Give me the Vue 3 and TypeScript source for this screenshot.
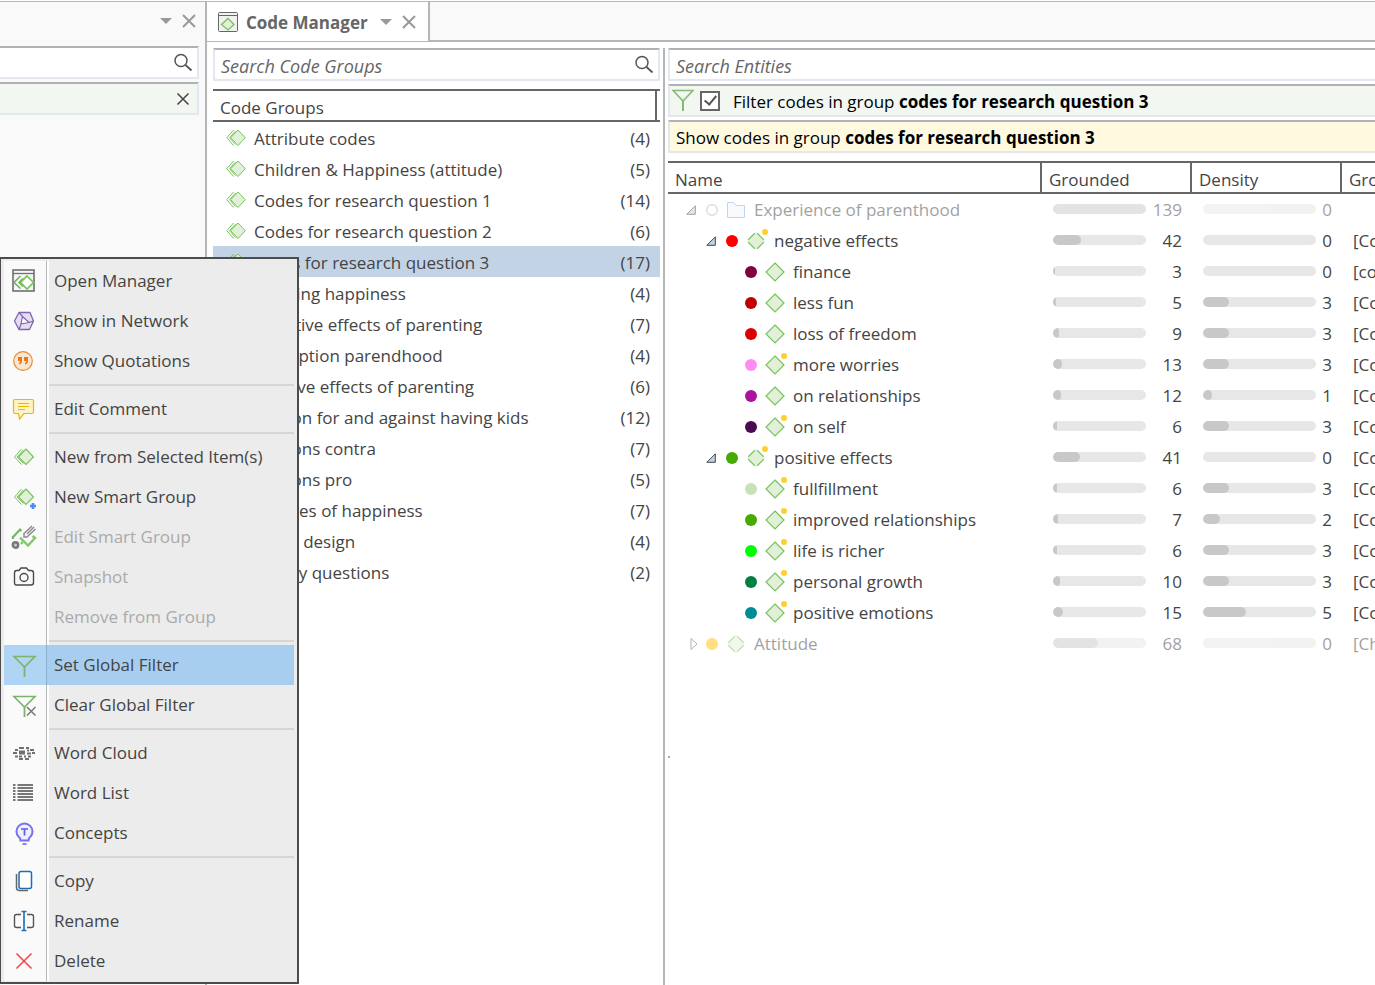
<script setup lang="ts">
import { ref } from 'vue'

interface CodeGroup { name: string; count: number }
interface CodeRow {
  name: string
  level: number
  color: string
  grounded: number
  density: number
  groups: string
  folder?: boolean
  comment?: boolean
  dashed?: boolean
  muted?: boolean
  state?: 'open' | 'closed'
}
interface MenuItem { label: string; icon: string; disabled?: boolean; active?: boolean }

const groups: CodeGroup[] = [
  { name: 'Attribute codes', count: 4 },
  { name: 'Children & Happiness (attitude)', count: 5 },
  { name: 'Codes for research question 1', count: 14 },
  { name: 'Codes for research question 2', count: 6 },
  { name: 'codes for research question 3', count: 17 },
  { name: 'Defining happiness', count: 4 },
  { name: 'Negative effects of parenting', count: 7 },
  { name: 'Perception parendhood', count: 4 },
  { name: 'Positive effects of parenting', count: 6 },
  { name: 'Reason for and against having kids', count: 12 },
  { name: 'Reasons contra', count: 7 },
  { name: 'Reasons pro', count: 5 },
  { name: 'Sources of happiness', count: 7 },
  { name: 'Study design', count: 4 },
  { name: 'Survey questions', count: 2 },
]
const selected = ref(4)
const filterOn = ref(true)
const groupSearch = ref('')
const entitySearch = ref('')
const leftSearch = ref('')

const tag = '[Codes for research question 3]'
const rows: CodeRow[] = [
  { name: 'Experience of parenthood', level: 0, color: '', grounded: 139, density: 0, groups: '', folder: true, muted: true, state: 'open' },
  { name: 'negative effects', level: 1, color: '#ff0000', grounded: 42, density: 0, groups: tag, comment: true, dashed: true, state: 'open' },
  { name: 'finance', level: 2, color: '#800040', grounded: 3, density: 0, groups: '[codes for research question 3]' },
  { name: 'less fun', level: 2, color: '#c00000', grounded: 5, density: 3, groups: tag },
  { name: 'loss of freedom', level: 2, color: '#de0000', grounded: 9, density: 3, groups: tag },
  { name: 'more worries', level: 2, color: '#ff8cf5', grounded: 13, density: 3, groups: tag, comment: true },
  { name: 'on relationships', level: 2, color: '#a814a0', grounded: 12, density: 1, groups: tag },
  { name: 'on self', level: 2, color: '#4c0a50', grounded: 6, density: 3, groups: tag, comment: true },
  { name: 'positive effects', level: 1, color: '#46aa00', grounded: 41, density: 0, groups: tag, comment: true, dashed: true, state: 'open' },
  { name: 'fullfillment', level: 2, color: '#c6e2b6', grounded: 6, density: 3, groups: tag, comment: true },
  { name: 'improved relationships', level: 2, color: '#46aa00', grounded: 7, density: 2, groups: tag, comment: true },
  { name: 'life is richer', level: 2, color: '#00ff00', grounded: 6, density: 3, groups: tag, comment: true },
  { name: 'personal growth', level: 2, color: '#008040', grounded: 10, density: 3, groups: tag, comment: true },
  { name: 'positive emotions', level: 2, color: '#008c96', grounded: 15, density: 5, groups: tag, comment: true },
  { name: 'Attitude', level: 0, color: '#ffc000', grounded: 68, density: 0, groups: '[Children & Happiness]', dashed: true, muted: true, state: 'closed' },
]
const maxGrounded = 139
const maxDensity = 13
const share = (value: number, max: number): string => `${(value / max) * 100}%`

const menu: MenuItem[][] = [
  [
    { label: 'Open Manager', icon: 'manager' },
    { label: 'Show in Network', icon: 'network' },
    { label: 'Show Quotations', icon: 'quote' },
  ],
  [{ label: 'Edit Comment', icon: 'comment' }],
  [
    { label: 'New from Selected Item(s)', icon: 'group' },
    { label: 'New Smart Group', icon: 'smart' },
    { label: 'Edit Smart Group', icon: 'editsmart', disabled: true },
    { label: 'Snapshot', icon: 'camera', disabled: true },
    { label: 'Remove from Group', icon: '', disabled: true },
  ],
  [
    { label: 'Set Global Filter', icon: 'filter', active: true },
    { label: 'Clear Global Filter', icon: 'nofilter' },
  ],
  [
    { label: 'Word Cloud', icon: 'cloud' },
    { label: 'Word List', icon: 'list' },
    { label: 'Concepts', icon: 'bulb' },
  ],
  [
    { label: 'Copy', icon: 'copy' },
    { label: 'Rename', icon: 'rename' },
    { label: 'Delete', icon: 'delete' },
  ],
]
</script>

<template>
  <div class="app">
    <aside class="side">
      <div class="side-bar">
        <button class="plain" aria-label="Panel options"><svg width="12" height="6" viewBox="0 0 12 6"><path d="M0 0H12L6 6Z" fill="#999" /></svg></button>
        <button class="plain" aria-label="Close panel"><svg width="14" height="14" viewBox="0 0 14 14"><path d="M1 1L13 13M13 1L1 13" stroke="#999" stroke-width="2" /></svg></button>
      </div>
      <div class="field side-field">
        <input v-model="leftSearch" type="text" aria-label="Search" />
        <svg class="lens" width="20" height="20" viewBox="0 0 20 20"><circle cx="8" cy="7.500" r="6" fill="none" stroke="#555" stroke-width="1.500" /><path d="M12.500 12L18.500 17.500" stroke="#555" stroke-width="1.800" /></svg>
      </div>
      <div class="field side-field green side-filter">
        <span class="grow"></span>
        <button class="plain" aria-label="Clear filter"><svg width="14" height="14" viewBox="0 0 14 14"><path d="M1.500 1.500L12.500 12.500M12.500 1.500L1.500 12.500" stroke="#444" stroke-width="1.500" /></svg></button>
      </div>
    </aside>

    <main class="main">
      <header class="tabs">
        <div class="tab">
          <svg width="20" height="20" viewBox="0 0 20 20">
            <rect x=".5" y=".5" width="19" height="19" rx="1" fill="#f1f1f1" stroke="#666" /><path d="M0 3.500H20" stroke="#666" />
            <path d="M10 6.500L16 12.500L10 18L3.500 12.500Z" fill="#e2f0da" stroke="#77c35a" stroke-width="1.300" />
          </svg>
          <h1>Code Manager</h1>
          <button class="plain" aria-label="Tab options"><svg width="12" height="6" viewBox="0 0 12 6"><path d="M0 0H12L6 6Z" fill="#999" /></svg></button>
          <button class="plain" aria-label="Close tab"><svg width="14" height="14" viewBox="0 0 14 14"><path d="M1 1L13 13M13 1L1 13" stroke="#999" stroke-width="2" /></svg></button>
        </div>
        <div class="tab-rest"></div>
      </header>

      <div class="panes">
        <section class="groups">
          <div class="field">
            <input v-model="groupSearch" type="text" placeholder="Search Code Groups" aria-label="Search Code Groups" />
            <svg class="lens" width="20" height="20" viewBox="0 0 20 20"><circle cx="8" cy="7.500" r="6" fill="none" stroke="#555" stroke-width="1.500" /><path d="M12.500 12L18.500 17.500" stroke="#555" stroke-width="1.800" /></svg>
          </div>
          <h2 class="groups-head"><span>Code Groups</span></h2>
          <ul class="group-list">
            <li v-for="(g, i) in groups" :key="g.name">
              <button class="group-row" :class="{ selected: i === selected }" @click="selected = i">
                <svg width="20" height="18" viewBox="0 0 20 18">
                  <path d="M7.500 1L.8 8.700L7.500 16.500M9.500 2L3.500 8.700L9.500 15.500" fill="none" stroke="#77c35a" />
                  <path d="M12 1L19.300 8.700L12 16.500L4.700 8.700Z" fill="#e2f0da" stroke="#77c35a" />
                </svg>
                <span class="row-text grow">{{ g.name }}</span>
                <span class="row-text">({{ g.count }})</span>
              </button>
            </li>
          </ul>
        </section>

        <section class="entities">
          <span class="grip"></span>
          <div class="field">
            <input v-model="entitySearch" type="text" placeholder="Search Entities" aria-label="Search Entities" />
          </div>
          <div class="field green filter">
            <svg width="22" height="23" viewBox="0 0 22 23"><path d="M1 1.500H21L11 12Z" fill="none" stroke="#86b878" stroke-width="1.600" /><path d="M11 11V22" stroke="#86b878" stroke-width="2" /></svg>
            <input id="use-filter" v-model="filterOn" type="checkbox" />
            <label for="use-filter" class="row-text">Filter codes in group <b>codes for research question 3</b></label>
          </div>
          <p class="field yellow"><span class="row-text">Show codes in group <b>codes for research question 3</b></span></p>

          <table>
            <colgroup><col class="c-name" /><col class="c-num" /><col class="c-num" /><col /></colgroup>
            <thead>
              <tr><th>Name</th><th>Grounded</th><th>Density</th><th>Groups</th></tr>
            </thead>
            <tbody>
              <tr v-for="r in rows" :key="r.name" :class="{ muted: r.muted }">
                <td>
                  <div class="name" :class="'level-' + r.level">
                    <span class="twist">
                      <svg v-if="r.state === 'open'" width="12" height="10" viewBox="0 0 12 10"><path d="M.8 9.300H9.300V.9Z" fill="#c3d3e6" stroke="#444" /></svg>
                      <svg v-else-if="r.state === 'closed'" width="12" height="12" viewBox="-4 0 12 12"><path d="M1 .5L7 6L1 11.500Z" fill="#fff" stroke="#666" /></svg>
                    </span>
                    <span class="dot-cell">
                      <svg width="12" height="12" viewBox="0 0 12 12">
                        <circle v-if="r.color" cx="6" cy="6" r="6" :fill="r.color" />
                        <circle v-else cx="6" cy="6" r="5.300" fill="none" stroke="#bbb" stroke-width="1.400" />
                      </svg>
                    </span>
                    <svg v-if="r.folder" class="kind" width="28" height="24" viewBox="0 0 28 24"><path d="M5.500 4.500H11.500L14 7.500H22.500V19.500H5.500Z" fill="#f3f7fe" stroke="#86a9e0" stroke-linejoin="round" /></svg>
                    <svg v-else class="kind" width="28" height="24" viewBox="0 0 28 24">
                      <path d="M14 3L23 12L14 21L5 12Z" fill="#e2f0da" stroke="#77c35a" stroke-width="1.200" :stroke-dasharray="r.dashed ? '9.300 3.428' : undefined" :stroke-dashoffset="r.dashed ? -1.714 : undefined" />
                      <circle v-if="r.comment" cx="23" cy="3" r="3" fill="#ffcf30" />
                    </svg>
                    <span class="label">{{ r.name }}</span>
                  </div>
                </td>
                <td>
                  <div class="measure">
                    <span class="bar"><i :style="{ width: share(r.grounded, maxGrounded) }"></i></span>
                    <span class="num wide">{{ r.grounded }}</span>
                  </div>
                </td>
                <td>
                  <div class="measure">
                    <span class="bar"><i :style="{ width: share(r.density, maxDensity) }"></i></span>
                    <span class="num">{{ r.density }}</span>
                  </div>
                </td>
                <td class="tags">{{ r.groups }}</td>
              </tr>
            </tbody>
          </table>
        </section>
      </div>
    </main>

    <div class="menu" role="menu">
      <div v-for="(section, s) in menu" :key="s" class="menu-section" role="group">
        <button v-for="m in section" :key="m.label" class="item" :class="{ active: m.active }" :disabled="m.disabled" role="menuitem">
          <span class="icon">
            <svg width="24" height="24" viewBox="0 0 24 24" fill="none">
              <template v-if="m.icon === 'manager'">
                <rect x="1" y="1" width="21" height="21" fill="#f6f6f6" stroke="#707070" stroke-width="1.600" /><path d="M1 4.500H22" stroke="#707070" stroke-width="1.300" />
                <path d="M8.500 7L2 13.500L8.500 19.500M11 9.500L7 13.500L11 17.500" stroke="#6fae5e" stroke-width="1.500" /><path d="M15 7L21.500 13.500L15 20L8.500 13.500Z" fill="#fff" stroke="#77c35a" stroke-width="1.700" />
              </template>
              <template v-else-if="m.icon === 'network'">
                <path d="M7 3.500H18L21.500 12L17.500 20.500H7L2.500 12Z" fill="#e5deef" stroke="#8064b4" stroke-width="1.300" stroke-linejoin="round" />
                <path d="M10.500 7.500L17 13.500L9 15ZM7 3.500L10.500 7.500M17 13.500L21.500 12M9 15L7 20.500" stroke="#8064b4" stroke-width="1.200" /><path d="M11 9.500L15.500 13L10 14Z" fill="#fff" />
              </template>
              <template v-else-if="m.icon === 'quote'">
                <circle cx="11" cy="12" r="9.300" fill="#fbe5d0" stroke="#e28b35" stroke-width="1.200" />
                <path d="M6 8H10V12Q10 14.500 7 15.500V14Q8.200 13.300 8.200 12H6ZM12 8H16V12Q16 14.500 13 15.500V14Q14.200 13.300 14.200 12H12Z" fill="#df7c1c" />
              </template>
              <path v-else-if="m.icon === 'comment'" d="M3 2.500H20Q21.500 2.500 21.500 4V15Q21.500 16.500 20 16.500H12L7.500 22L6.500 16.500H3Q1.500 16.500 1.500 15V4Q1.500 2.500 3 2.500ZM6 6.500H17M6 9.500H17M6 12.500H13" fill="#fff3c4" stroke="#ecb800" stroke-width="1.200" />
              <template v-else-if="m.icon === 'group' || m.icon === 'smart'">
                <path d="M9.500 4L2.500 12L9.500 19.500M11.500 5L5 12L11.500 18.500" stroke="#77c35a" /><path d="M14 4L21.500 12L14 19.500L6.500 12Z" fill="#e2f0da" stroke="#77c35a" stroke-width="1.100" />
                <path v-if="m.icon === 'smart'" d="M21 18V24M18 21H24" stroke="#4a8df8" stroke-width="2.600" />
              </template>
              <template v-else-if="m.icon === 'editsmart'">
                <path d="M1 12L8 4.500L9.500 6M1 11V14" stroke="#76b566" stroke-width="2.200" /><path d="M8 12.500L16 20.500L23 13L20.500 11M9 17L10.500 19" stroke="#80c968" stroke-width="2.400" />
                <path d="M12 8.500L20 1M15 12L23.500 4M12 8V12H15.500M15 9L22 2" stroke="#8c8c8c" stroke-width="1.500" /><circle cx="3.500" cy="20" r="2.700" fill="#ccc" stroke="#777" stroke-width="2.400" />
              </template>
              <template v-else-if="m.icon === 'camera'">
                <path d="M4.500 5.500H7L9 3H14.500L16.500 5.500H19Q21.500 5.500 21.500 8V17.500Q21.500 20 19 20H4.500Q2.500 20 2.500 17.500V8Q2.500 5.500 4.500 5.500Z" stroke="#4a4a4a" stroke-width="1.400" /><circle cx="12" cy="12.500" r="4" stroke="#4a4a4a" stroke-width="1.400" />
              </template>
              <template v-else-if="m.icon === 'filter' || m.icon === 'nofilter'">
                <path d="M2 3.500H23L12.500 14Z" stroke="#7db36c" stroke-width="1.600" /><path d="M12.500 13V24" stroke="#7db36c" stroke-width="1.800" />
                <path v-if="m.icon === 'nofilter'" d="M15 14L23.500 22.500M23.500 14L15 22.500" stroke="#777" stroke-width="1.500" />
              </template>
              <path v-else-if="m.icon === 'cloud'" d="M7 7H12M14 7H17M3 9H6M18 9H22M1 12H5M7 10.500H13M7 12.500H13M15 12.500H19M20 12H23M15 9.500H17M3 15.500H6M7 15.500H10M12 15.500H14M16 15.500H19M7 18H11M13 18H17" stroke="#707070" stroke-width="2" />
              <path v-else-if="m.icon === 'list'" d="M1 4H3.500M5.500 4H21M1 7H3.500M5.500 7H21M1 10H3.500M5.500 10H21M1 13H3.500M5.500 13H21M1 16H3.500M5.500 16H21M1 19H3.500M5.500 19H21" stroke="#777" stroke-width="1.800" />
              <template v-else-if="m.icon === 'bulb'">
                <path d="M8.500 19.500Q8.500 17 6.500 15.500Q4.500 13.500 4.500 10.500A8 8 0 0 1 20.500 10.500Q20.500 13.500 18.500 15.500Q16.500 17 16.500 19.500Z" fill="#f0effe" stroke="#7472f0" stroke-width="2" />
                <path d="M9 8H16M12.500 8V14.500M10.500 23H14.500" stroke="#5d5bea" stroke-width="1.700" />
              </template>
              <template v-else-if="m.icon === 'copy'">
                <path d="M4.500 5V18.500Q4.500 21.500 7.500 21.500H16" stroke="#666" stroke-width="1.500" /><rect x="7" y="2.500" width="12.500" height="17" rx="2" fill="#fff" stroke="#1a6fb8" stroke-width="1.500" />
              </template>
              <template v-else-if="m.icon === 'rename'">
                <path d="M9 5.500H4.500Q2.500 5.500 2.500 7.500V16.500Q2.500 18.500 4.500 18.500H9M15 5.500H19.500Q21.500 5.500 21.500 7.500V16.500Q21.500 18.500 19.500 18.500H15" stroke="#555" stroke-width="1.400" /><path d="M12 2.500V21.500M9.500 2.500H14.500M9.500 21.500H14.500" stroke="#1a6fb8" stroke-width="1.600" />
              </template>
              <path v-else-if="m.icon === 'delete'" d="M4.500 4.500L19.500 19.500M19.500 4.500L4.500 19.500" stroke="#ee4444" stroke-width="1.500" />
            </svg>
          </span>
          <span class="item-label">{{ m.label }}</span>
        </button>
      </div>
    </div>
  </div>
</template>

<style>
body { margin: 0; background: #fff; }
</style>

<style scoped>
* { box-sizing: border-box; }
.app {
  position: relative;
  display: flex;
  min-height: 100vh;
  padding-top: 1px;
  overflow: hidden;
  background: #fff;
  color: #444;
  font: 17px/24px "Open Sans", "Noto Sans", sans-serif;
}
button, input { font: inherit; color: inherit; }
svg { display: block; flex: none; }
.plain { display: flex; padding: 0; border: 0; background: none; }
.grow { flex: 1; }
.row-text { padding-top: 2px; }

.side {
  display: flex;
  flex: none;
  flex-direction: column;
  gap: 3px;
  width: 207px;
  border-top: 1px solid #b6b6b6;
  border-right: 2px solid #b6b6b6;
  background: #f9f9f9;
}
.side-bar {
  display: flex;
  align-items: center;
  justify-content: flex-end;
  gap: 10px;
  height: 41px;
  padding: 0 9px 4px 0;
}
.field {
  display: flex;
  align-items: center;
  height: 33px;
  margin: 0 0 3px;
  padding: 0 4px 0 6px;
  border: 2px solid #e3e7ef;
  border-top-color: #b0b0b6;
  background: #fff;
  white-space: nowrap;
}
.field input[type="text"] {
  flex: 1;
  min-width: 0;
  padding: 2px 0 0;
  border: 0;
  outline: 0;
  background: none;
  font-size: 18px;
}
.field input::placeholder { color: #666; font-style: italic; opacity: 1; }
.side-field { margin: 0 6px 0 0; border-left: 0; }
.side-filter { padding-right: 7px; }
.green { background: #f2f7f1; }
.yellow { background: #fffadf; }
b { font-weight: 700; }

.main { display: flex; flex: 1; flex-direction: column; min-width: 0; border-top: 1px solid #b6b6b6; }
.tabs { display: flex; height: 40px; margin-bottom: 6px; }
.tab {
  display: flex;
  align-items: center;
  padding: 0 12px 0 11px;
  border-bottom: 1px solid #b6b6b6;
}
.tab h1 { margin: 0 12px 0 8px; padding-top: 2px; color: #666; font-size: 17px; font-weight: 700; }
.tab .plain + .plain { margin-left: 10px; }
.tab-rest { flex: 1; border: solid #b6b6b6; border-width: 0 0 2px 2px; background: #f9f9f9; }

.panes { display: flex; flex: 1; }
.groups { flex: none; width: 458px; padding: 0 3px 0 6px; border-right: 2px solid #b6b6b6; }
.groups .field { margin: 0 0 8px; }
.groups-head {
  height: 33px;
  margin: 0;
  padding-right: 3px;
  border: solid #666;
  border-width: 2px 0;
  font-size: 17px;
  font-weight: 400;
}
.groups-head span { display: block; height: 29px; padding: 5px 7px 0; border-right: 2px solid #666; }
.group-list { margin: 0; padding: 0; list-style: none; }
.group-row {
  display: flex;
  align-items: center;
  gap: 8px;
  width: 100%;
  height: 31px;
  padding: 0 10px 0 13px;
  border: 0;
  background: none;
  text-align: left;
  white-space: nowrap;
}
.group-row.selected { background: #c3d3e6; }

.entities { position: relative; flex: 1; min-width: 0; padding-left: 3px; overflow: hidden; }
.grip { position: absolute; top: 708px; left: 3px; width: 2px; height: 2px; background: #aaa; }
.entities .field { border-right: 0; }
.filter, .yellow { color: #000; }
.entities .filter { padding: 0 2px; }
.entities .yellow { margin-bottom: 8px; }
.filter input {
  appearance: none;
  width: 20px;
  height: 20px;
  margin: 0 13px 0 6px;
  border: 2px solid #666;
  background: #fff;
}
.filter input:checked::before {
  content: "";
  display: block;
  width: 5px;
  height: 10px;
  margin: 0 0 0 5px;
  border: solid #555;
  border-width: 0 2px 2px 0;
  rotate: 40deg;
}

table { width: 100%; table-layout: fixed; border-collapse: separate; border-spacing: 0; }
.c-name { width: 374px; }
.c-num { width: 150px; }
th {
  height: 33px;
  padding: 5px 0 0 7px;
  border: solid #666;
  border-width: 2px 2px 2px 0;
  font-weight: 400;
  line-height: 24px;
  text-align: left;
  overflow: hidden;
}
th:last-child { border-right: 0; }
td { height: 31px; padding: 0; white-space: nowrap; }
.name { display: flex; align-items: center; height: 31px; padding-left: 14px; }
.level-1 { padding-left: 34px; }
.level-2 { padding-left: 53px; }
.twist { display: flex; justify-content: center; width: 20px; }
.dot-cell { display: flex; justify-content: center; width: 20px; }
.kind { overflow: visible; }
.label { margin-left: 4px; }
.measure { display: flex; align-items: center; padding: 0 10px 0 11px; }
.bar { flex: 1; height: 10px; margin-bottom: 2px; border-radius: 5px; background: #e7e7e7; overflow: hidden; }
.bar i { display: block; height: 100%; border-radius: 5px; background: #c8c8c8; }
.num { width: 16px; text-align: right; }
.num.wide { width: 36px; }
.tags { padding-left: 11px; overflow: hidden; }
.muted td { opacity: .5; }

.menu {
  position: absolute;
  top: 257px;
  left: 0;
  width: 299px;
  padding: 2px 3px 1px;
  border: 2px solid #4c4c4c;
  border-left-width: 1px;
  background: #ececec;
}
.menu-section + .menu-section {
  padding-top: 8px;
  background:
    linear-gradient(#d6d6d6, #d6d6d6) 45px 3px / 100% 2px no-repeat,
    linear-gradient(90deg, #fafafa 42px, #b6b6b6 42px 43px, #fff 43px 45px, transparent 45px);
}
.item {
  display: flex;
  align-items: center;
  width: 100%;
  height: 40px;
  padding: 0;
  border: 0;
  background: none;
  text-align: left;
  white-space: nowrap;
}
.icon {
  display: flex;
  align-items: center;
  flex: none;
  width: 45px;
  height: 40px;
  padding-left: 8px;
  background: linear-gradient(90deg, #fafafa 42px, #b6b6b6 42px 43px, #fff 43px);
}
.icon svg { overflow: visible; }
.item-label { margin-left: 5px; }
.item:disabled .item-label { color: #aaa; }
.item.active { background: #a8ceef; }
.item.active .icon { background: linear-gradient(90deg, #afd4f4 42px, #8bb0d0 42px 43px, #a8ceef 43px); }
</style>
